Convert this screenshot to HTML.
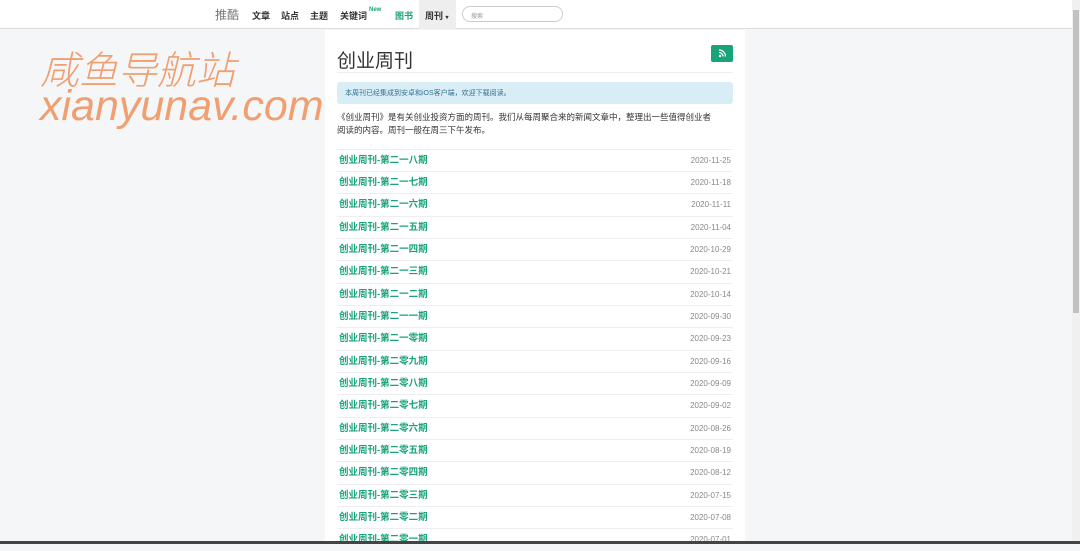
<!DOCTYPE html>
<html><head><meta charset="utf-8"><style>
*{margin:0;padding:0;box-sizing:border-box}
body{width:1080px;height:544px;overflow:hidden;background:#f5f6f8;font-family:"Liberation Sans","Noto Sans CJK SC",sans-serif;position:relative}
.nav{position:absolute;left:0;top:0;width:1072px;height:29px;background:#fff;border-bottom:1px solid #ddd}
.nav span{position:absolute;top:9px;font-size:9px;color:#333;font-weight:bold}
.main{position:absolute;left:325px;top:30px;width:420px;height:514px;background:#fff}
.h1{position:absolute;left:12px;top:16px;font-size:19px;color:#333}
.rss{position:absolute;left:386px;top:15px;width:22px;height:17px;background:#18a37a;border-radius:2px}
.hr{position:absolute;left:12px;width:396px;height:1px;background:#eee}
.alert{position:absolute;left:12px;top:52px;width:396px;height:22px;background:#d9edf7;border-radius:3px;font-size:7px;color:#31708f;padding:6px 8px}
.desc{position:absolute;left:12px;top:81px;width:400px;font-size:8.5px;line-height:13px;color:#333}
.row{position:absolute;left:12px;width:396px;height:22px;border-top:1px solid #eee}
.row a{position:absolute;left:2px;top:0;line-height:22px;font-size:9.5px;font-weight:bold;color:#18a37a;text-decoration:none}
.row i{position:absolute;right:2px;top:0;line-height:22px;font-size:8px;font-style:normal;color:#888}
.wm{position:absolute;left:40px;color:#f0a070;font-style:italic}
.sb{position:absolute;left:1072px;top:0;width:8px;height:544px;background:#f0f0f0}
.th{position:absolute;left:1073px;top:10px;width:6px;height:303px;background:#c1c1c1}
</style></head><body>
<div class="nav">
<span style="left:215px;top:6px;font-size:12px;font-weight:normal;color:#777">推酷</span>
<span style="left:252px">文章</span><span style="left:281px">站点</span><span style="left:310px">主题</span>
<span style="left:340px">关键词</span><span style="left:369px;top:7px;font-size:6px;color:#18a37a">New</span>
<span style="left:395px;color:#18a37a">图书</span>
<div style="position:absolute;left:419px;top:0;width:37px;height:29px;background:#eee"></div>
<span style="left:425px">周刊 <small style="font-size:6px">▾</small></span>
<div style="position:absolute;left:462px;top:6px;width:101px;height:16px;border:1px solid #ccc;border-radius:8px;font-size:6px;color:#999;padding:4px 8px">搜索</div>
</div>
<div class="wm" style="top:40px;font-size:39px;font-family:'Noto Sans CJK SC',sans-serif;font-weight:300">咸鱼导航站</div>
<div class="wm" style="top:82px;font-size:43px">xianyunav.com</div>
<div class="main">
<div class="h1">创业周刊</div>
<div class="rss"><svg width="22" height="17" viewBox="0 0 22 17"><circle cx="9" cy="11" r="1.2" fill="#fff"/><path d="M8 7.5a4 4 0 0 1 4 4M8 5a6.5 6.5 0 0 1 6.5 6.5" stroke="#fff" stroke-width="1.3" fill="none"/></svg></div>
<div class="hr" style="top:42px"></div>
<div class="alert">本周刊已经集成到安卓和iOS客户端，欢迎下载阅读。</div>
<div class="desc">《创业周刊》是有关创业投资方面的周刊。我们从每周聚合来的新闻文章中，整理出一些值得创业者<br>阅读的内容。周刊一般在周三下午发布。</div>
</div>
<div id="rows"></div>
<script>
var n=["一八","一七","一六","一五","一四","一三","一二","一一","一零","零九","零八","零七","零六","零五","零四","零三","零二","零一"];
var d=["11-25","11-18","11-11","11-04","10-29","10-21","10-14","09-30","09-23","09-16","09-09","09-02","08-26","08-19","08-12","07-15","07-08","07-01"];
var h="";for(var i=0;i<18;i++){h+='<div class="row" style="left:337px;top:'+(148.5+i*22.35)+'px"><a>创业周刊-第二'+n[i]+'期</a><i>2020-'+d[i]+'</i></div>';}
document.getElementById("rows").innerHTML=h;
</script>
<div class="sb"></div><div class="th"></div>
<div style="position:absolute;left:0;top:541px;width:1080px;height:3px;background:#444"></div>
</body></html>
